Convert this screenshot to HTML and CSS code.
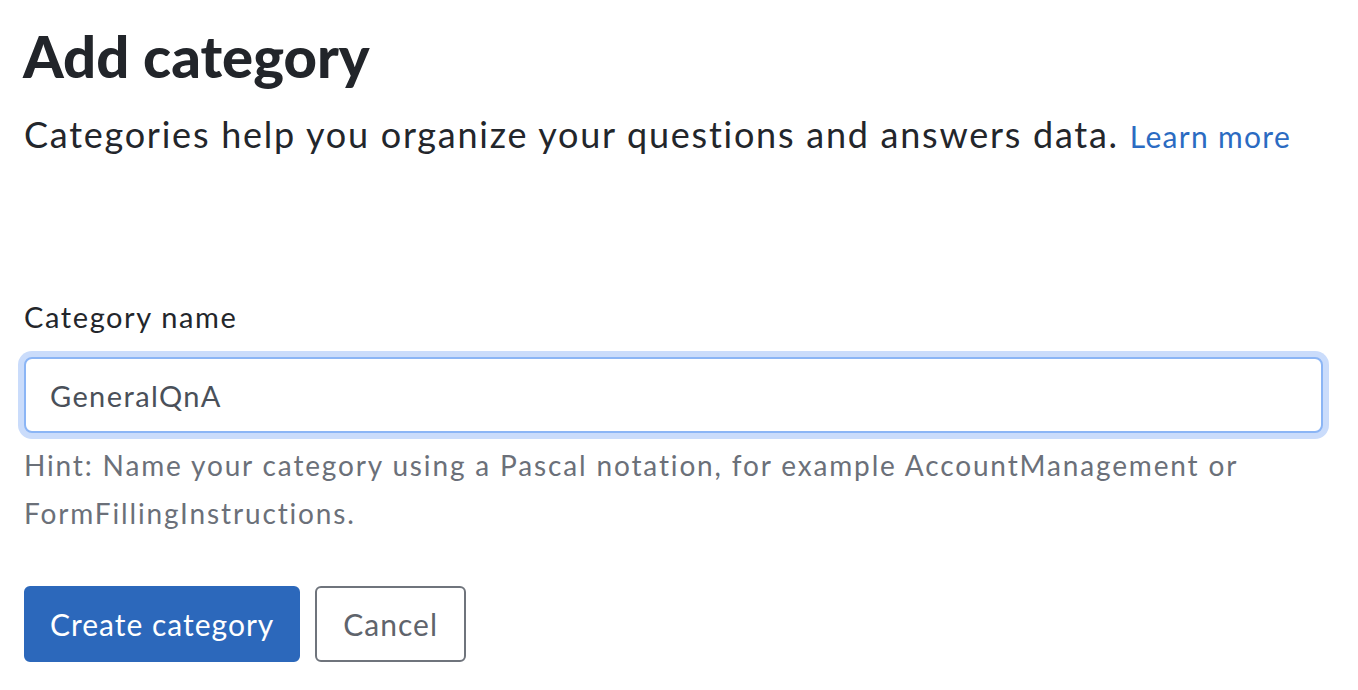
FILE: index.html
```html
<!DOCTYPE html>
<html lang="en">
<head>
<meta charset="utf-8">
<title>Add category</title>
<link rel="stylesheet" href="styles.css">
</head>
<body>
<main class="page">
  <h1 class="title">Add category</h1>
  <p class="lead">Categories help you organize your questions and answers data. <a class="link" href="#">Learn more</a></p>
  <form class="form">
    <label class="label" for="cat">Category name</label>
    <div class="field">
      <input class="input" id="cat" type="text" value="GeneralQnA">
    </div>
    <p class="hint">Hint: Name your category using a Pascal notation, for example AccountManagement or FormFillingInstructions.</p>
    <div class="actions">
      <button class="btn btn-primary" type="button">Create category</button>
      <button class="btn btn-secondary" type="button">Cancel</button>
    </div>
  </form>
</main>
</body>
</html>
```
FILE: styles.css
```css
* { box-sizing: border-box; }
html, body { margin: 0; background: #fff; }
body {
  font-family: Lato, "Noto Sans", sans-serif;
  color: #23262b;
}
.page {
  padding: 20px 24px 0 24px;
  width: 1358px;
}
.title {
  margin: 0 0 0 -1px;
  font-size: 58px;
  font-weight: 900;
  line-height: 72px;
  color: #22252a;
  letter-spacing: 0;
}
.lead {
  margin: 20px 0 0 0;
  font-size: 36px;
  line-height: 44px;
  color: #23262b;
  letter-spacing: 1.75px;
}
.link {
  color: #2b6bc2;
  text-decoration: none;
  font-size: 30px;
  letter-spacing: 1.3px;
}
.form {
  margin-top: 141px;
  display: flex;
  flex-direction: column;
}
.label {
  font-size: 29px;
  line-height: 36px;
  color: #23262b;
  letter-spacing: 1.6px;
}
.field {
  margin: 22px 0 0 0;
  width: 1299px;
}
.input {
  display: block;
  width: 100%;
  height: 76px;
  border: 2px solid #8bb5f5;
  border-radius: 8px;
  box-shadow: 0 0 0 6px #cadcfb;
  padding: 0 24px;
  font-family: inherit;
  font-size: 29px;
  color: #4a5059;
  letter-spacing: 1.4px;
  outline: none;
  background: #fff;
}
.hint {
  margin: 8px 0 0 0;
  font-size: 28px;
  line-height: 48px;
  color: #6b7079;
  letter-spacing: 1.85px;
  width: 1299px;
}
.actions {
  display: flex;
  gap: 15px;
  margin-top: 49px;
}
.btn {
  height: 76px;
  border-radius: 6px;
  font-family: inherit;
  font-size: 30px;
  letter-spacing: 1px;
  padding: 0 24px;
  cursor: pointer;
}
.btn-primary {
  background: #2c68bb;
  border: 2px solid #2c68bb;
  color: #fff;
}
.btn-secondary {
  background: #fff;
  border: 2px solid #6f747c;
  color: #5f646c;
  padding: 0 26px;
}
```
